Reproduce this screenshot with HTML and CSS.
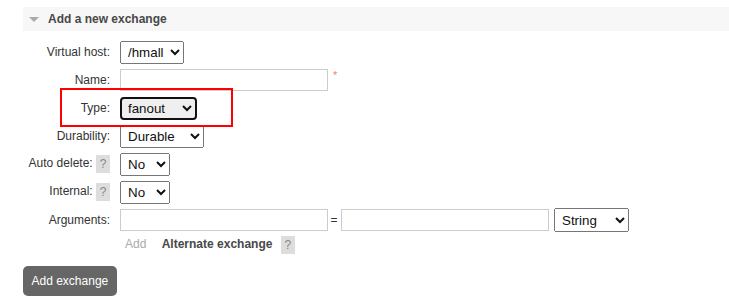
FILE: index.html
```html
<!DOCTYPE html>
<html lang="en">
<head>
    <meta charset="UTF-8">
    <meta name="viewport" content="width=device-width, initial-scale=1.0">
    <title>Add a new exchange</title>
    <link rel="stylesheet" href="styles.css">
</head>
<body>

<div class="section">
    <h2 class="section-title"><span class="toggle"></span>Add a new exchange</h2>

    <form class="exchange-form">
        <table class="form">
            <tr>
                <th><label for="vhost">Virtual host:</label></th>
                <td>
                    <select id="vhost" name="vhost">
                        <option>/hmall</option>
                    </select>
                </td>
            </tr>
            <tr>
                <th><label for="name">Name:</label></th>
                <td><input type="text" id="name" name="name" class="wide"><span class="mand">*</span></td>
            </tr>
            <tr>
                <th><label for="type">Type:</label></th>
                <td>
                    <select id="type" name="type" class="focused">
                        <option>fanout</option>
                        <option>direct</option>
                        <option>headers</option>
                        <option>topic</option>
                    </select>
                </td>
            </tr>
            <tr>
                <th><label for="durable">Durability:</label></th>
                <td>
                    <select id="durable" name="durable">
                        <option>Durable</option>
                        <option>Transient</option>
                    </select>
                </td>
            </tr>
            <tr>
                <th><label for="auto_delete">Auto delete:</label> <span class="help">?</span></th>
                <td>
                    <select id="auto_delete" name="auto_delete">
                        <option>No</option>
                        <option>Yes</option>
                    </select>
                </td>
            </tr>
            <tr>
                <th><label for="internal">Internal:</label> <span class="help">?</span></th>
                <td>
                    <select id="internal" name="internal">
                        <option>No</option>
                        <option>Yes</option>
                    </select>
                </td>
            </tr>
            <tr>
                <th><label>Arguments:</label></th>
                <td>
                    <div class="multifield">
                        <input type="text" name="arg_key" class="wide">
                        <span class="equals">=</span>
                        <input type="text" name="arg_value" class="wide">
                        <select name="arg_type" class="arg-type">
                            <option>String</option>
                            <option>Number</option>
                            <option>Boolean</option>
                            <option>List</option>
                        </select>
                    </div>
                </td>
            </tr>
            <tr class="shortcuts">
                <th></th>
                <td>
                    <span class="add-label">Add</span>
                    <span class="argument-link">Alternate exchange</span>
                    <span class="help">?</span>
                </td>
            </tr>
        </table>
        <input type="button" class="submit" value="Add exchange">
    </form>

    <!-- highlight around the Type row -->
    <div class="highlight"></div>
</div>

</body>
</html>
```

FILE: styles.css
```css
body {
    margin: 0;
    font-family: "Liberation Sans", Arial, sans-serif;
    font-size: 12px;
    color: #333;
    background: #fff;
}
.section {
    padding: 7px 0 0 23px;
}
.section-title {
    margin: 0;
    height: 24px;
    line-height: 24px;
    padding-left: 25px;
    position: relative;
    background-color: #f7f7f7;
    color: #484848;
    font-size: 12px;
    font-weight: bold;
}
.toggle {
    position: absolute;
    left: 6px;
    top: 10px;
    width: 0;
    height: 0;
    border-left: 5.5px solid transparent;
    border-right: 5.5px solid transparent;
    border-top: 5px solid #aaa;
}
.exchange-form {
    margin-top: 7px;
}
table.form {
    border-collapse: collapse;
}
table.form th {
    width: 82px;
    padding: 0 10px 0 5px;
    text-align: right;
    font-weight: normal;
    white-space: nowrap;
}
table.form tr {
    height: 28px;
}
table.form td {
    padding: 0;
    vertical-align: middle;
    white-space: nowrap;
}
table.form tr.shortcuts {
    height: 22px;
}
select {
    font-family: "Liberation Sans", Arial, sans-serif;
    font-size: 13.333px;
    color: #111;
    height: 23px;
    padding: 0 3px;
}
select.focused {
    border: 2px solid #111;
    border-radius: 4px;
    height: 23px;
    padding: 0 2px;
}
input.wide {
    box-sizing: border-box;
    width: 208px;
    height: 22px;
    border: 1px solid #ccc;
    padding: 0 4px;
    margin: 0;
    font-family: "Liberation Sans", Arial, sans-serif;
    font-size: 12px;
}
.mand {
    color: #f77;
    font-size: 11px;
    margin-left: 5px;
    vertical-align: top;
}
.help {
    display: inline-block;
    width: 14px;
    height: 18px;
    line-height: 18px;
    text-align: center;
    background-color: #ddd;
    color: #888;
    font-size: 12px;
    vertical-align: middle;
}
.multifield {
    display: flex;
    align-items: center;
}
.equals {
    margin: 0 3.5px 0 2.5px;
}
.arg-type {
    margin-left: 5px;
    height: 24px;
    width: 75px;
}
.add-label {
    color: #aaa;
    margin-left: 5px;
}
.argument-link {
    font-weight: bold;
    color: #484848;
    margin: 0 5px 0 12px;
}
.submit {
    margin-top: 10px;
    background-color: #666;
    color: #fff;
    border: none;
    border-radius: 5px;
    padding: 8px 8.5px;
    font-family: "Liberation Sans", Arial, sans-serif;
    font-size: 12px;
    line-height: 14px;
    cursor: pointer;
}
.submit:hover {
    background-color: #555;
}
.highlight {
    position: absolute;
    left: 60px;
    top: 88px;
    width: 169px;
    height: 35px;
    border: 2px solid #f00;
}
```
